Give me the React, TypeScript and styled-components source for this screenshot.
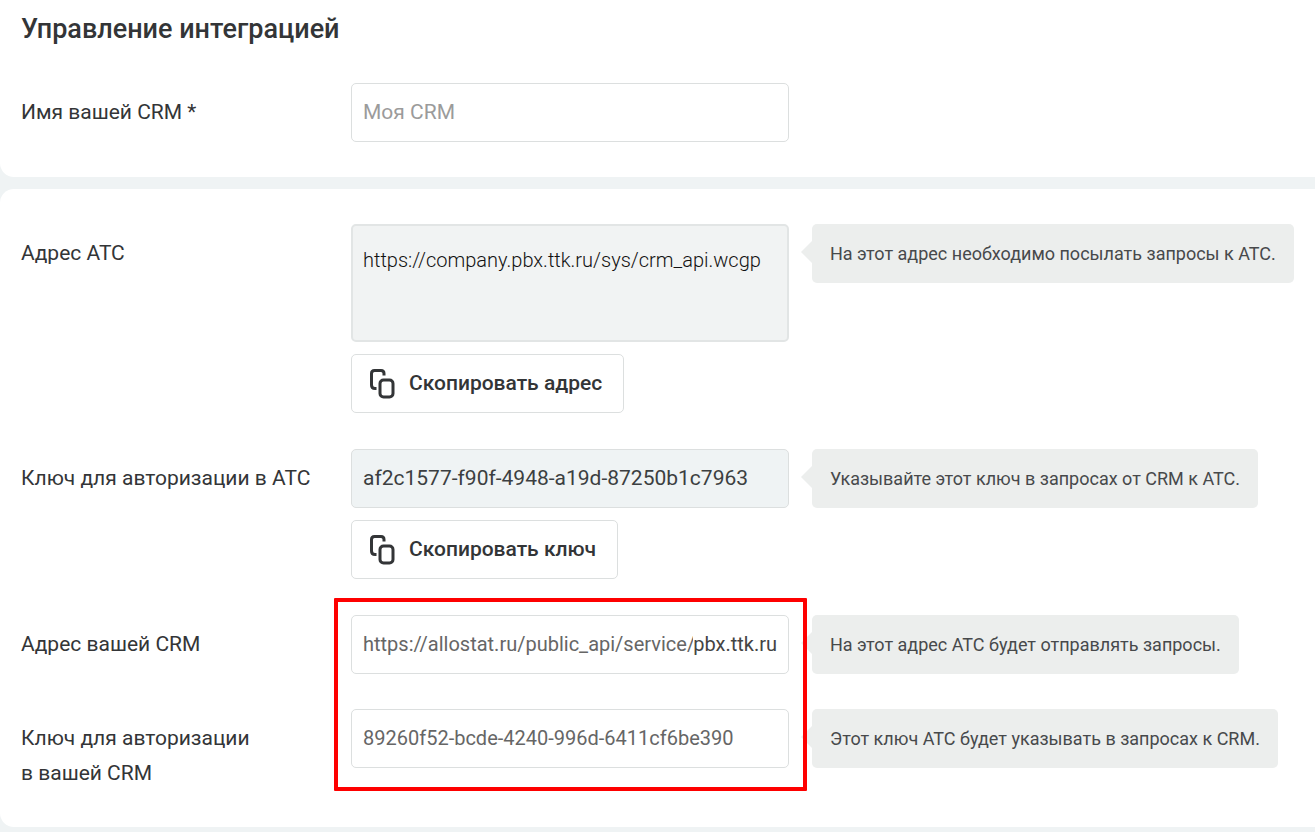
import React from "react";
import styled, { createGlobalStyle } from "styled-components";

const GlobalStyle = createGlobalStyle`
  *, *::before, *::after { box-sizing: border-box; }
  body {
    margin: 0;
    background: #eff3f4;
    color: #333537;
    font-family: Roboto, "Liberation Sans", sans-serif;
    font-size: 21px;
    line-height: 35px;
  }
`;

const Page = styled.main`
  display: flex;
  flex-direction: column;
  gap: 12px;
  padding-bottom: 5px;
`;

const Panel = styled.section<{ $first?: boolean }>`
  display: flex;
  flex-direction: column;
  gap: 36px;
  padding: ${(p) => (p.$first ? "11px 21px 35px" : "35px 21px 36px")};
  border-radius: ${(p) => (p.$first ? "0 0 0 14px" : "14px 0 0 14px")};
  background: #fff;
`;

const Title = styled.h1`
  margin: 0;
  font-size: 27px;
  line-height: 36px;
  font-weight: 500;
`;

const Row = styled.div`
  position: relative;
  display: grid;
  grid-template-columns: 330px minmax(240px, 438px) minmax(0, 1fr);
  row-gap: 35px;
  align-items: start;
`;

const Label = styled.label`
  padding: 12px 24px 0 0;
`;

const Stack = styled.div`
  display: flex;
  flex-direction: column;
  align-items: flex-start;
  gap: 12px;
`;

const Field = styled.div<{ $filled?: boolean }>`
  display: flex;
  align-items: center;
  width: 100%;
  height: 59px;
  padding: 0 11px;
  border: 1px solid #dcdfdf;
  border-radius: 5px;
  background: ${(p) => (p.$filled ? "#eff3f4" : "#fff")};
`;

const Input = styled.input<{ $muted?: boolean; $compact?: boolean }>`
  flex: 1;
  min-width: 0;
  height: 35px;
  padding: 0;
  border: 0;
  outline: 0;
  background: transparent;
  color: ${(p) => (p.$muted ? "#666" : "#3c3f41")};
  font: inherit;
  font-size: ${(p) => (p.$compact ? "20px" : "21px")};
  &::placeholder { color: #9b9b9b; opacity: 1; }
`;

const Suffix = styled.span`
  color: #444;
  font-size: 20px;
`;

const Area = styled.textarea`
  display: block;
  width: 100%;
  height: 118px;
  padding: 17px 10px;
  border: 2px solid #e2e5e5;
  border-radius: 5px;
  outline: 0;
  resize: none;
  overflow: hidden;
  background: #f1f3f3;
  color: #111;
  font: inherit;
  font-size: 20px;
  font-weight: 300;
`;

const CopyButton = styled.button`
  display: flex;
  align-items: center;
  gap: 11px;
  height: 59px;
  padding: 0 21px 0 16px;
  border: 1px solid #dcdfdf;
  border-radius: 5px;
  background: #fff;
  color: #333537;
  font: inherit;
  font-weight: 500;
  cursor: pointer;
`;

const Hint = styled.p`
  position: relative;
  justify-self: start;
  margin: 0 0 0 23px;
  padding: 12px 18px;
  border-radius: 5px;
  background: #eceeed;
  color: #47494b;
  font-size: 18px;
  &::before {
    content: "";
    position: absolute;
    top: 16px;
    left: -11px;
    border: 12px solid transparent;
    border-left-width: 0;
    border-right-color: #eceeed;
  }
`;

const Highlight = styled.div`
  position: absolute;
  grid-column: 2 / 3;
  grid-row: 1 / 3;
  inset: -17px -18px 0 -17px;
  border: 4px solid #fe0000;
  border-radius: 1px;
  pointer-events: none;
`;

const CopyIcon = () => (
  <svg width="30" height="34" viewBox="0 0 30 34" fill="none" stroke="#333537" strokeWidth="3" aria-hidden="true">
    <path d="M8.5 21.5 H7 Q3.5 21.5 3.5 18 V6.5 Q3.5 3.5 6.5 3.5 H13 Q16 3.5 16 6.5 V8.5" />
    <rect x="12" y="13" width="13" height="17" rx="3.5" />
  </svg>
);

export default function App() {
  return (
    <>
      <GlobalStyle />
      <Page>
        <Panel $first>
          <Title>Управление интеграцией</Title>
          <Row>
            <Label htmlFor="crm-name">Имя вашей CRM *</Label>
            <Field>
              <Input id="crm-name" placeholder="Моя CRM" required />
            </Field>
          </Row>
        </Panel>
        <Panel>
          <Row>
            <Label htmlFor="pbx-url">Адрес АТС</Label>
            <Stack>
              <Area id="pbx-url" readOnly spellCheck={false} value="https://company.pbx.ttk.ru/sys/crm_api.wcgp" />
              <CopyButton type="button">
                <CopyIcon />
                Скопировать адрес
              </CopyButton>
            </Stack>
            <Hint>На этот адрес необходимо посылать запросы к АТС.</Hint>
          </Row>
          <Row>
            <Label htmlFor="pbx-key">Ключ для авторизации в АТС</Label>
            <Stack>
              <Field $filled>
                <Input id="pbx-key" readOnly value="af2c1577-f90f-4948-a19d-87250b1c7963" />
              </Field>
              <CopyButton type="button">
                <CopyIcon />
                Скопировать ключ
              </CopyButton>
            </Stack>
            <Hint>Указывайте этот ключ в запросах от CRM к АТС.</Hint>
          </Row>
          <Row>
            <Label htmlFor="crm-url">Адрес вашей CRM</Label>
            <Field>
              <Input id="crm-url" $muted $compact defaultValue="https://allostat.ru/public_api/service/" />
              <Suffix>pbx.ttk.ru</Suffix>
            </Field>
            <Hint>На этот адрес АТС будет отправлять запросы.</Hint>
            <Label htmlFor="crm-key">
              Ключ для авторизации
              <br />в вашей CRM
            </Label>
            <Field>
              <Input id="crm-key" $muted $compact defaultValue="89260f52-bcde-4240-996d-6411cf6be390" />
            </Field>
            <Hint>Этот ключ АТС будет указывать в запросах к CRM.</Hint>
            <Highlight />
          </Row>
        </Panel>
      </Page>
    </>
  );
}
